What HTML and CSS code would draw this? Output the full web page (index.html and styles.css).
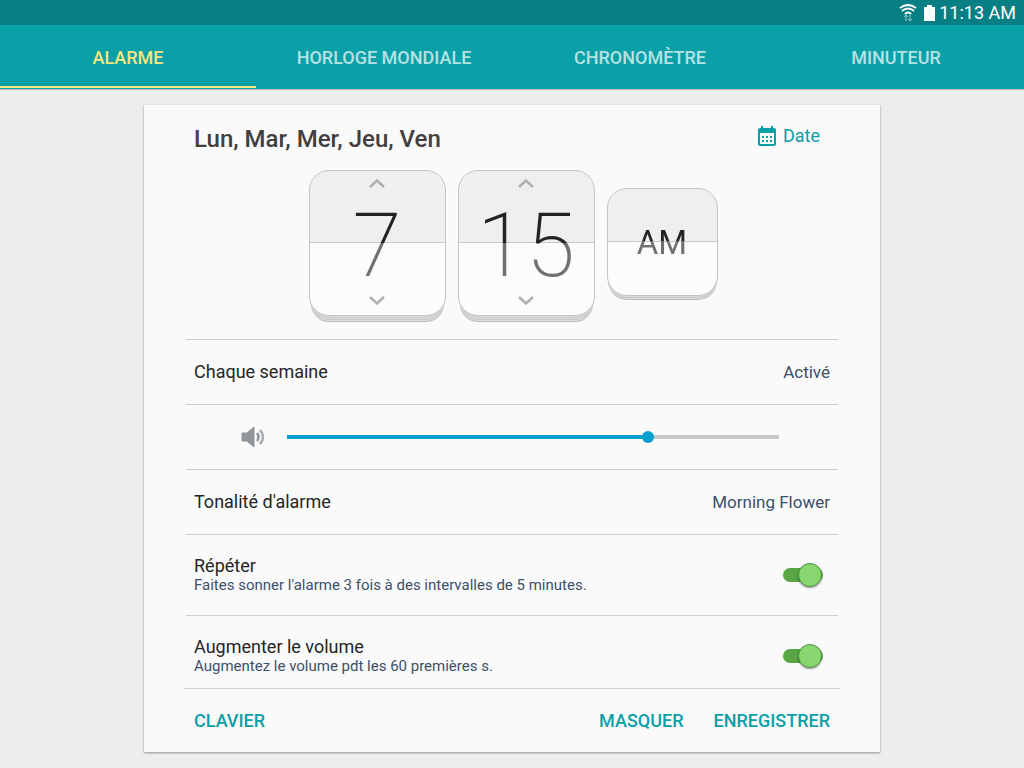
FILE: index.html
```html
<!DOCTYPE html>
<html lang="fr">
<head>
  <meta charset="UTF-8">
  <meta name="viewport" content="width=device-width, initial-scale=1.0">
  <title>Alarme</title>
  <link rel="stylesheet" href="styles.css">
</head>
<body>
  <!-- Status bar -->
  <div class="status-bar">
    <svg class="wifi" width="18" height="20" viewBox="0 0 18 20" fill="none" stroke="#fff" stroke-width="2">
      <path d="M1 5 Q9 -1 17 5"/>
      <path d="M3 8 Q9 3 15 8"/>
      <path d="M6 11 Q9 8 12 11"/>
      <path d="M7 18 V12 M5 14 L7 12 L9 14" stroke="#8fc9c9" stroke-width="1"/>
      <path d="M11 12 V18 M9 16 L11 18 L13 16" stroke="#8fc9c9" stroke-width="1"/>
    </svg>
    <svg class="battery" width="11" height="16" viewBox="0 0 11 16">
      <path d="M3 0 H8 V2 H11 V16 H0 V2 H3 Z" fill="#fff"/>
    </svg>
    <span>11:13 AM</span>
  </div>

  <!-- Tabs -->
  <nav class="tabs">
    <a href="#" class="tab active">ALARME</a>
    <a href="#" class="tab">HORLOGE MONDIALE</a>
    <a href="#" class="tab">CHRONOMÈTRE</a>
    <a href="#" class="tab">MINUTEUR</a>
  </nav>

  <main class="card">
    <div class="card-header">
      <h1>Lun, Mar, Mer, Jeu, Ven</h1>
      <button class="date-btn" type="button">
        <svg width="18" height="20" viewBox="0 0 18 20">
          <path fill="#0b9fa7" fill-rule="evenodd" d="M3 0 H5 V2 H13 V0 H15 V2 H16 Q18 2 18 4 V18 Q18 20 16 20 H2 Q0 20 0 18 V4 Q0 2 2 2 H3 Z M2 7 V18 H16 V7 Z"/>
          <path fill="#0b9fa7" d="M4 10h2v2H4z M8 10h2v2H8z M12 10h2v2h-2z M4 14h2v2H4z M8 14h2v2H8z M12 14h2v2h-2z"/>
        </svg>
        Date
      </button>
    </div>

    <!-- Time picker -->
    <div class="picker">
      <div class="tile">
        <button type="button" class="arrow" aria-label="Heure suivante">
          <svg width="16" height="9" viewBox="0 0 16 9"><path d="M1 8 L8 1.5 L15 8"/></svg>
        </button>
        <input class="digits" type="text" value="7" aria-label="Heure">
        <button type="button" class="arrow" aria-label="Heure précédente">
          <svg width="16" height="9" viewBox="0 0 16 9"><path d="M1 1 L8 7.5 L15 1"/></svg>
        </button>
      </div>
      <div class="tile">
        <button type="button" class="arrow" aria-label="Minute suivante">
          <svg width="16" height="9" viewBox="0 0 16 9"><path d="M1 8 L8 1.5 L15 8"/></svg>
        </button>
        <input class="digits" type="text" value="15" aria-label="Minutes">
        <button type="button" class="arrow" aria-label="Minute précédente">
          <svg width="16" height="9" viewBox="0 0 16 9"><path d="M1 1 L8 7.5 L15 1"/></svg>
        </button>
      </div>
      <button type="button" class="tile tile-small"><span class="period">AM</span></button>
    </div>

    <!-- Settings -->
    <div class="row">
      <span class="title">Chaque semaine</span>
      <span class="value">Activé</span>
    </div>
    <div class="row volume">
      <svg width="24" height="22" viewBox="0 0 24 22">
        <path d="M1 7 H6 L13 1 V21 L6 15 H1 Z" fill="#8f9699" stroke="#8f9699" stroke-linejoin="round"/>
        <path d="M16 7 Q19 11 16 15" fill="none" stroke="#8f9699" stroke-width="2.5"/>
        <path d="M19 4 Q25 11 19 18" fill="none" stroke="#a5abad" stroke-width="2.5"/>
      </svg>
      <input type="range" min="0" max="100" value="74" aria-label="Volume">
    </div>
    <div class="row">
      <span class="title">Tonalité d'alarme</span>
      <span class="value">Morning Flower</span>
    </div>
    <div class="row row-tall">
      <label for="repeat">
        <span class="title">Répéter</span>
        <span class="hint">Faites sonner l'alarme 3 fois à des intervalles de 5 minutes.</span>
      </label>
      <input type="checkbox" class="switch" id="repeat" checked>
    </div>
    <div class="row row-tall row-last">
      <label for="increase">
        <span class="title">Augmenter le volume</span>
        <span class="hint">Augmentez le volume pdt les 60 premières s.</span>
      </label>
      <input type="checkbox" class="switch" id="increase" checked>
    </div>

    <div class="actions">
      <button type="button">CLAVIER</button>
      <button type="button" class="push">MASQUER</button>
      <button type="button">ENREGISTRER</button>
    </div>
  </main>
</body>
</html>
```
FILE: styles.css
```css
* {
  box-sizing: border-box;
}

body {
  margin: 0;
  background-color: #ededed;
  font-family: Roboto, sans-serif;
  color: #252525;
}

button,
input {
  margin: 0;
  padding: 0;
  border: none;
  background: none;
  font-family: inherit;
}

button {
  cursor: pointer;
}

/* Status bar */
.status-bar {
  display: flex;
  justify-content: flex-end;
  align-items: center;
  height: 25px;
  padding-right: 8px;
  background-color: #077f84;
  color: #fff;
  font-size: 18px;
}

.wifi {
  margin-right: 7px;
}

.battery {
  margin-right: 4px;
}

/* Tabs */
.tabs {
  display: flex;
  height: 64px;
  background-color: #0aa0a8;
  box-shadow: 0 1px 1px rgba(0, 0, 0, 0.2);
}

.tab {
  flex: 1;
  padding-top: 2px;
  border-bottom: 2px solid transparent;
  line-height: 62px;
  text-align: center;
  text-decoration: none;
  font-size: 18px;
  font-weight: 500;
  color: #b5e2e5;
}

.tab.active {
  height: 63px;
  color: #f5e67f;
  border-bottom-color: #f5e67f;
}

/* Card */
.card {
  max-width: 736px;
  margin: 16px auto;
  padding: 0 40px;
  background-color: #fafafa;
  box-shadow: 0 1px 2px rgba(0, 0, 0, 0.4);
}

.card-header {
  display: flex;
  justify-content: space-between;
  align-items: flex-start;
  padding: 16px 20px 0 10px;
}

h1 {
  margin: 0;
  font-size: 24px;
  line-height: 36px;
  font-weight: 500;
  color: #404040;
}

.date-btn {
  display: flex;
  align-items: center;
  gap: 7px;
  font-size: 18px;
  line-height: 30px;
  color: #0b9fa7;
}

/* Time picker */
.picker {
  display: flex;
  justify-content: center;
  gap: 12px;
  padding: 13px 0 23px 2px;
}

.tile {
  display: flex;
  flex-direction: column;
  align-items: center;
  width: 137px;
  height: 146px;
  padding: 8px 0;
  border: 1px solid #c4c4c4;
  border-radius: 20px;
  background: linear-gradient(#efefef 71px, #c8c8c8 71px, #c8c8c8 72px, #fcfcfc 72px);
  box-shadow: 0 2px 0 -1px #dcdcdc, 0 3px 0 -1px #c8c8c8, 0 5px 0 -2px #dcdcdc,
    0 6px 0 -2px #c8c8c8, 0 7px 0 -2px #dcdcdc, 0 8px 0 -2px #bcbcbc;
}

.arrow {
  display: flex;
}

.arrow path {
  fill: none;
  stroke: #b0b0b0;
  stroke-width: 2.5;
}

.digits {
  width: 100%;
  height: 108px;
  padding-top: 6px;
  text-align: center;
  font-size: 89px;
  font-weight: 200;
  background: linear-gradient(#222 55px, #707070 55px);
  -webkit-background-clip: text;
  background-clip: text;
  color: transparent;
}

.tile-small {
  justify-content: center;
  align-self: flex-start;
  width: 111px;
  height: 108px;
  margin-top: 18px;
  background: linear-gradient(#efefef 52px, #c8c8c8 52px, #c8c8c8 53px, #fcfcfc 53px);
  box-shadow: 0 2px 0 -1px #dcdcdc, 0 3px 0 -1px #c8c8c8, 0 4px 0 -1px #dcdcdc,
    0 5px 0 -1px #bcbcbc;
}

.period {
  padding-top: 2px;
  font-size: 33px;
  line-height: 40px;
  font-weight: 400;
  background: linear-gradient(#222 20px, #707070 20px);
  -webkit-background-clip: text;
  background-clip: text;
  color: transparent;
}

/* Settings rows */
.row {
  display: flex;
  justify-content: space-between;
  align-items: center;
  height: 65px;
  margin: 0 2px;
  padding: 0 8px;
  border-top: 1px solid #cdcdcd;
}

.row-tall {
  height: 81px;
  padding-right: 15px;
}

.row-last {
  height: 73px;
  padding-top: 8px;
}

.title {
  display: block;
  font-size: 18px;
  line-height: 20px;
}

.value {
  font-size: 17px;
  color: #3c5068;
}

.hint {
  display: block;
  font-size: 15px;
  line-height: 18px;
  color: #3c5068;
}

.volume {
  gap: 22px;
  padding: 0 59px 0 55px;
}

input[type="range"] {
  flex: 1;
  height: 12px;
  -webkit-appearance: none;
  appearance: none;
}

input[type="range"]::-webkit-slider-runnable-track {
  height: 4px;
  background: linear-gradient(to right, #06a0d0 74%, #c8c8c8 74%);
}

input[type="range"]::-webkit-slider-thumb {
  -webkit-appearance: none;
  width: 12px;
  height: 12px;
  margin-top: -4px;
  border-radius: 50%;
  background-color: #06a0d0;
}

/* Switch */
.switch {
  display: flex;
  align-items: center;
  justify-content: flex-end;
  width: 40px;
  height: 14px;
  border-radius: 7px;
  background-color: #58a744;
  -webkit-appearance: none;
  appearance: none;
}

.switch::before {
  content: "";
  flex: none;
  width: 22px;
  height: 22px;
  margin-right: 1px;
  border: 1px solid #4c9140;
  border-radius: 50%;
  background-color: #88d66f;
  box-shadow: 0 1px 2px rgba(0, 0, 0, 0.4);
}

/* Bottom buttons */
.actions {
  display: flex;
  gap: 30px;
  height: 64px;
  padding: 0 10px;
  border-top: 1px solid #cdcdcd;
}

.actions button {
  font-size: 18px;
  font-weight: 500;
  color: #0b9fa7;
}

.actions .push {
  margin-left: auto;
}
```
